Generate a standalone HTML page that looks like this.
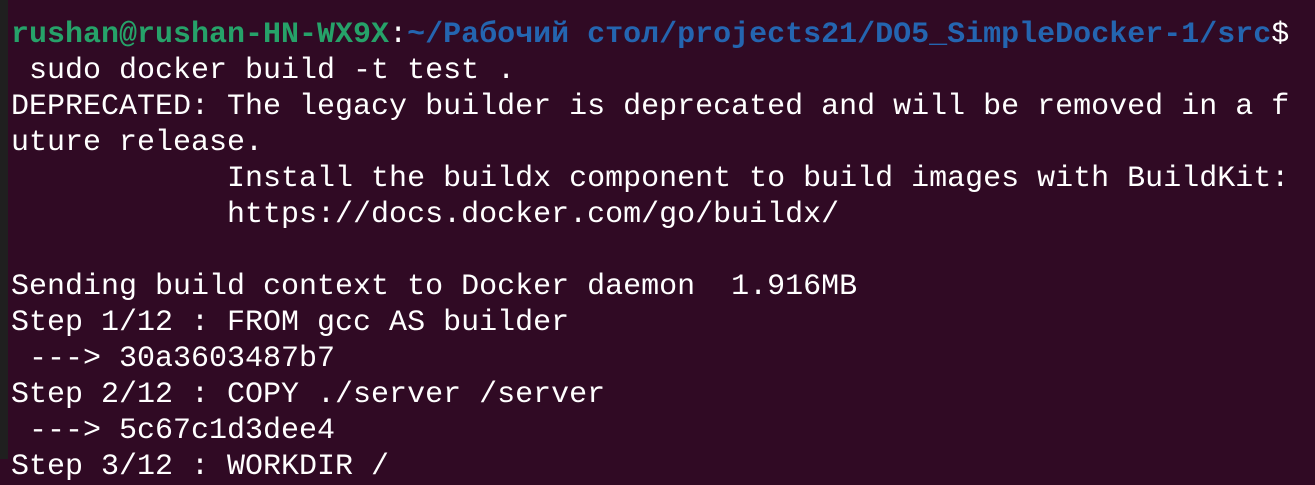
<!DOCTYPE html>
<html><head><style>
html,body{margin:0;padding:0;width:1315px;height:459px;overflow:hidden;background:#300a24;}
.strip{position:absolute;left:0;top:0;width:8px;height:459px;background:#1f1f1f;}
pre{position:absolute;left:11px;top:17px;margin:0;font-family:"Liberation Mono",monospace;font-size:30px;line-height:36px;color:#ffffff;white-space:pre;}
.g{color:#26a269;font-weight:bold}
.b{color:#2465b0;font-weight:bold}
</style></head><body>
<div class="strip"></div>
<pre><span class="g">rushan@rushan-HN-WX9X</span>:<span class="b">~/Рабочий стол/projects21/DO5_SimpleDocker-1/src</span>$
 sudo docker build -t test .
DEPRECATED: The legacy builder is deprecated and will be removed in a f
uture release.
            Install the buildx component to build images with BuildKit:
            https://docs.docker.com/go/buildx/

Sending build context to Docker daemon  1.916MB
Step 1/12 : FROM gcc AS builder
 ---&gt; 30a3603487b7
Step 2/12 : COPY ./server /server
 ---&gt; 5c67c1d3dee4
Step 3/12 : WORKDIR /</pre>
</body></html>
